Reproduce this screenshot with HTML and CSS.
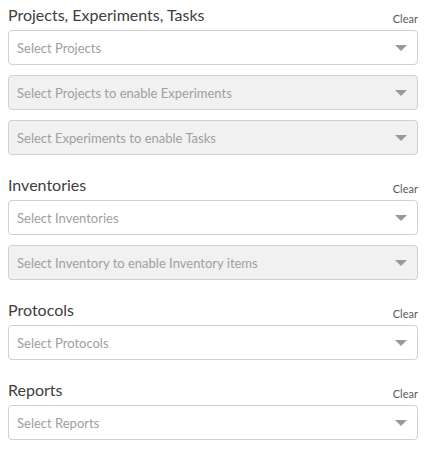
FILE: index.html
```html
<!DOCTYPE html>
<html>
<head>
<meta charset="utf-8">
<link rel="stylesheet" href="styles.css">
</head>
<body>
<div class="filters">
  <section class="group">
    <div class="group-header">
      <span class="group-title">Projects, Experiments, Tasks</span>
      <span class="clear">Clear</span>
    </div>
    <div class="selects">
      <div class="select"><span class="placeholder">Select Projects</span><span class="arrow"></span></div>
      <div class="select disabled"><span class="placeholder">Select Projects to enable Experiments</span><span class="arrow"></span></div>
      <div class="select disabled"><span class="placeholder">Select Experiments to enable Tasks</span><span class="arrow"></span></div>
    </div>
  </section>
  <section class="group">
    <div class="group-header">
      <span class="group-title">Inventories</span>
      <span class="clear">Clear</span>
    </div>
    <div class="selects">
      <div class="select"><span class="placeholder">Select Inventories</span><span class="arrow"></span></div>
      <div class="select disabled"><span class="placeholder">Select Inventory to enable Inventory items</span><span class="arrow"></span></div>
    </div>
  </section>
  <section class="group">
    <div class="group-header">
      <span class="group-title">Protocols</span>
      <span class="clear">Clear</span>
    </div>
    <div class="selects">
      <div class="select"><span class="placeholder">Select Protocols</span><span class="arrow"></span></div>
    </div>
  </section>
  <section class="group">
    <div class="group-header">
      <span class="group-title">Reports</span>
      <span class="clear">Clear</span>
    </div>
    <div class="selects">
      <div class="select"><span class="placeholder">Select Reports</span><span class="arrow"></span></div>
    </div>
  </section>
</div>
</body>
</html>
```
FILE: styles.css
```css
html, body {
  margin: 0;
  padding: 0;
  background: #fff;
}
body {
  font-family: Lato, "Open Sans", sans-serif;
  padding: 0 9px 0 8px;
}
.filters {
  display: flex;
  flex-direction: column;
  gap: 15px;
}
.group-header {
  height: 30px;
  box-sizing: border-box;
  padding-bottom: 5px;
  display: flex;
  justify-content: space-between;
  align-items: flex-end;
}
.group-title {
  font-size: 16px;
  line-height: 20px;
  color: #404040;
}
.clear {
  font-size: 11px;
  line-height: 13px;
  color: #5a5a5a;
}
.selects {
  display: flex;
  flex-direction: column;
  gap: 10px;
}
.select {
  height: 35px;
  box-sizing: border-box;
  border: 1px solid #d0d0d0;
  border-radius: 4px;
  background: #fff;
  display: flex;
  align-items: center;
  justify-content: space-between;
  padding: 0 10px 0 8px;
}
.select.disabled {
  background: #f1f1f1;
}
.placeholder {
  font-size: 13px;
  color: #a0a0a0;
}
.arrow {
  width: 0;
  height: 0;
  border-left: 6px solid transparent;
  border-right: 6px solid transparent;
  border-top: 6px solid #999;
}
```
